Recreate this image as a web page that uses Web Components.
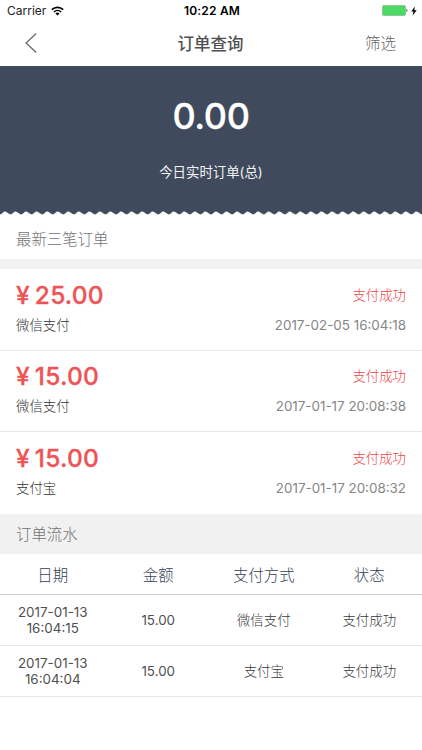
<!DOCTYPE html>
<html lang="zh-CN">
<head>
<meta charset="utf-8">
<title>订单查询</title>
<style>
  body {
    margin: 0;
    background: #fff;
    font-family: Inter, "Noto Sans CJK SC", sans-serif;
    color: #4a4a4a;
  }
</style>
</head>
<body>
<order-page></order-page>

<script>
class StatusBar extends HTMLElement {
  constructor() {
    super();
    this.attachShadow({ mode: 'open' });
  }

  connectedCallback() {
    this.shadowRoot.innerHTML = `
      <style>
        :host {
          display: grid;
          grid-template-columns: 1fr auto 1fr;
          align-items: center;
          height: 22px;
          padding: 0 5px 0 7px;
          color: #222;
          font-size: 12px;
          line-height: 22px;
        }
        .left, .right { display: flex; align-items: center; }
        .left { gap: 5px; }
        .right { justify-content: flex-end; gap: 3px; padding-bottom: 1px; }
        .time { font-weight: 600; letter-spacing: 0.2px; color: #000; }
        svg { display: block; }
      </style>
      <div class="left">
        <span>Carrier</span>
        <svg width="13" height="10" viewBox="0 0 13 10" fill="none" stroke="#000" stroke-width="1.6">
          <path d="M.8 3.7a8.2 8.2 0 0 1 11.4 0"/>
          <path d="M2.9 6a5.2 5.2 0 0 1 7.2 0"/>
          <path d="M6.5 9.5 4.5 7.4a3 3 0 0 1 4 0z" fill="#000" stroke="none"/>
        </svg>
      </div>
      <div class="time">10:22 AM</div>
      <div class="right">
        <svg width="26" height="11" viewBox="0 0 26 11">
          <rect x=".5" y=".5" width="23" height="10" rx="1.3" fill="#4cd964" stroke="#8fc79a"/>
          <path d="M24.5 3.8c1.2.4 1.2 3 0 3.4z" fill="#333"/>
        </svg>
        <svg width="6" height="10" viewBox="0 0 6 10"><path d="M3.8.5.3 5.5h2.2L1.7 9.5 5.7 4.2H3.4z" fill="#000"/></svg>
      </div>
    `;
  }
}

class NavBar extends HTMLElement {
  constructor() {
    super();
    this.attachShadow({ mode: 'open' });
  }

  connectedCallback() {
    this.shadowRoot.innerHTML = `
      <style>
        :host {
          display: grid;
          grid-template-columns: 1fr auto 1fr;
          align-items: center;
          height: 43.5px;
          padding: 0 26px 0 25px;
        }
        svg { display: block; margin-top: -1px; }
        .title { font-size: 16.5px; font-weight: 500; line-height: 24px; color: #505050; }
        .action { justify-self: end; font-size: 15.5px; font-weight: 300; line-height: 24px; color: #666; }
      </style>
      <svg width="12" height="20" viewBox="0 0 12 20" fill="none" stroke="#666" stroke-width="1.2">
        <path d="M11.2.5 1 10l10.2 9.5"/>
      </svg>
      <div class="title"><slot></slot></div>
      <div class="action"><slot name="action"></slot></div>
    `;
  }
}

class TotalBanner extends HTMLElement {
  constructor() {
    super();
    this.attachShadow({ mode: 'open' });
  }

  connectedCallback() {
    this.shadowRoot.innerHTML = `
      <style>
        :host {
          display: flex;
          flex-direction: column;
          height: 149.5px;
          color: #fff;
        }
        .body {
          display: flex;
          flex-direction: column;
          align-items: center;
          height: 145.5px;
          background: #3f4b5d;
        }
        .amount {
          margin-top: 28px;
          font-size: 36px;
          font-weight: 500;
          line-height: 44px;
          letter-spacing: -0.4px;
          -webkit-text-stroke: 0.3px #fff;
        }
        .label { margin-top: 24px; font-size: 13.4px; line-height: 20px; color: #f1f2f4; }
        .edge { display: block; width: 100%; height: 4px; }
      </style>
      <div class="body">
        <div class="amount"><slot name="amount"></slot></div>
        <div class="label"><slot></slot></div>
      </div>
      <svg class="edge">
        <defs>
          <pattern id="wave" width="10.55" height="4" patternUnits="userSpaceOnUse">
            <path d="M0 0h10.55v3.4C8.4 3.4 7.2 .6 5 .6S2.2 3.4 0 3.4z" fill="#3f4b5d"/>
          </pattern>
        </defs>
        <rect width="100%" height="4" fill="url(#wave)"/>
      </svg>
    `;
  }
}

class SectionTitle extends HTMLElement {
  constructor() {
    super();
    this.attachShadow({ mode: 'open' });
  }

  connectedCallback() {
    this.shadowRoot.innerHTML = `
      <style>
        :host {
          display: flex;
          align-items: center;
          box-sizing: border-box;
          height: 40px;
          padding: 2px 16px 0;
          font-size: 15.4px;
          font-weight: 300;
          line-height: 24px;
          color: #737373;
        }
        :host([shaded]) { background: #f1f1f1; }
        :host([divided]) {
          height: 54px;
          padding-top: 5px;
          border-bottom: 10px solid #f1f1f1;
        }
      </style>
      <slot></slot>
    `;
  }
}

class OrderItem extends HTMLElement {
  constructor() {
    super();
    this.attachShadow({ mode: 'open' });
  }

  connectedCallback() {
    this.shadowRoot.innerHTML = `
      <style>
        :host {
          display: flex;
          flex-direction: column;
          box-sizing: border-box;
          height: 81.5px;
          padding: 9.6px 16px 0;
          border-bottom: 1px solid #e8e8e8;
        }
        :host(:last-of-type) { border-bottom: 0; }
        .row { display: flex; justify-content: space-between; align-items: center; }
        .row + .row { margin-top: 4.4px; }
        .price {
          display: flex;
          gap: 5px;
          font-size: 24.5px;
          font-weight: 500;
          line-height: 32px;
          letter-spacing: 0.2px;
          color: #ee5355;
          -webkit-text-stroke: 0.3px #ee5355;
        }
        .status, .method { font-size: 13.4px; font-weight: 300; line-height: 20px; }
        .status { color: #ee4548; }
        .method { color: #333; }
        .time { font-size: 13.4px; line-height: 20px; color: #868686; }
      </style>
      <div class="row">
        <div class="price"><span>¥</span><span>${this.getAttribute('price')}</span></div>
        <div class="status">${this.getAttribute('status')}</div>
      </div>
      <div class="row">
        <div class="method">${this.getAttribute('method')}</div>
        <div class="time">${this.getAttribute('time')}</div>
      </div>
    `;
  }
}

class FlowRow extends HTMLElement {
  constructor() {
    super();
    this.attachShadow({ mode: 'open' });
  }

  connectedCallback() {
    this.shadowRoot.innerHTML = `
      <style>
        :host {
          display: grid;
          grid-template-columns: repeat(4, 1fr);
          align-items: center;
          box-sizing: border-box;
          height: 51px;
          padding-top: 1.6px;
          border-bottom: 1px solid #e6e6e6;
          text-align: center;
          font-size: 13.4px;
          line-height: 16px;
          color: #4f4f4f;
        }
        :host([head]) {
          height: 41px;
          padding-top: 4px;
          border-bottom-color: #cdcdd1;
          font-size: 15.4px;
          line-height: 24px;
          color: #344054;
        }
        :host([head]), ::slotted(.cjk) { font-weight: 300; }
        ::slotted(.cjk) { color: #3a3a3a; }
      </style>
      <slot></slot>
    `;
  }

  // the cells stay in the light DOM and are laid out by the host's grid
}

class OrderPage extends HTMLElement {
  constructor() {
    super();
    this.attachShadow({ mode: 'open' });
  }

  connectedCallback() {
    this.shadowRoot.innerHTML = `
      <style>
        :host { display: block; width: 422px; height: 750px; overflow: hidden; }
      </style>
      <status-bar></status-bar>
      <nav-bar>订单查询<span slot="action">筛选</span></nav-bar>
      <total-banner><span slot="amount">0.00</span>今日实时订单(总)</total-banner>
      <section-title divided>最新三笔订单</section-title>
      <order-item price="25.00" status="支付成功" method="微信支付" time="2017-02-05 16:04:18"></order-item>
      <order-item price="15.00" status="支付成功" method="微信支付" time="2017-01-17 20:08:38"></order-item>
      <order-item price="15.00" status="支付成功" method="支付宝" time="2017-01-17 20:08:32"></order-item>
      <section-title shaded>订单流水</section-title>
      <flow-row head><span>日期</span><span>金额</span><span>支付方式</span><span>状态</span></flow-row>
      <flow-row><span>2017-01-13<br>16:04:15</span><span>15.00</span><span class="cjk">微信支付</span><span class="cjk">支付成功</span></flow-row>
      <flow-row><span>2017-01-13<br>16:04:04</span><span>15.00</span><span class="cjk">支付宝</span><span class="cjk">支付成功</span></flow-row>
    `;
  }
}

customElements.define('status-bar', StatusBar);
customElements.define('nav-bar', NavBar);
customElements.define('total-banner', TotalBanner);
customElements.define('section-title', SectionTitle);
customElements.define('order-item', OrderItem);
customElements.define('flow-row', FlowRow);
customElements.define('order-page', OrderPage);
</script>
</body>
</html>
